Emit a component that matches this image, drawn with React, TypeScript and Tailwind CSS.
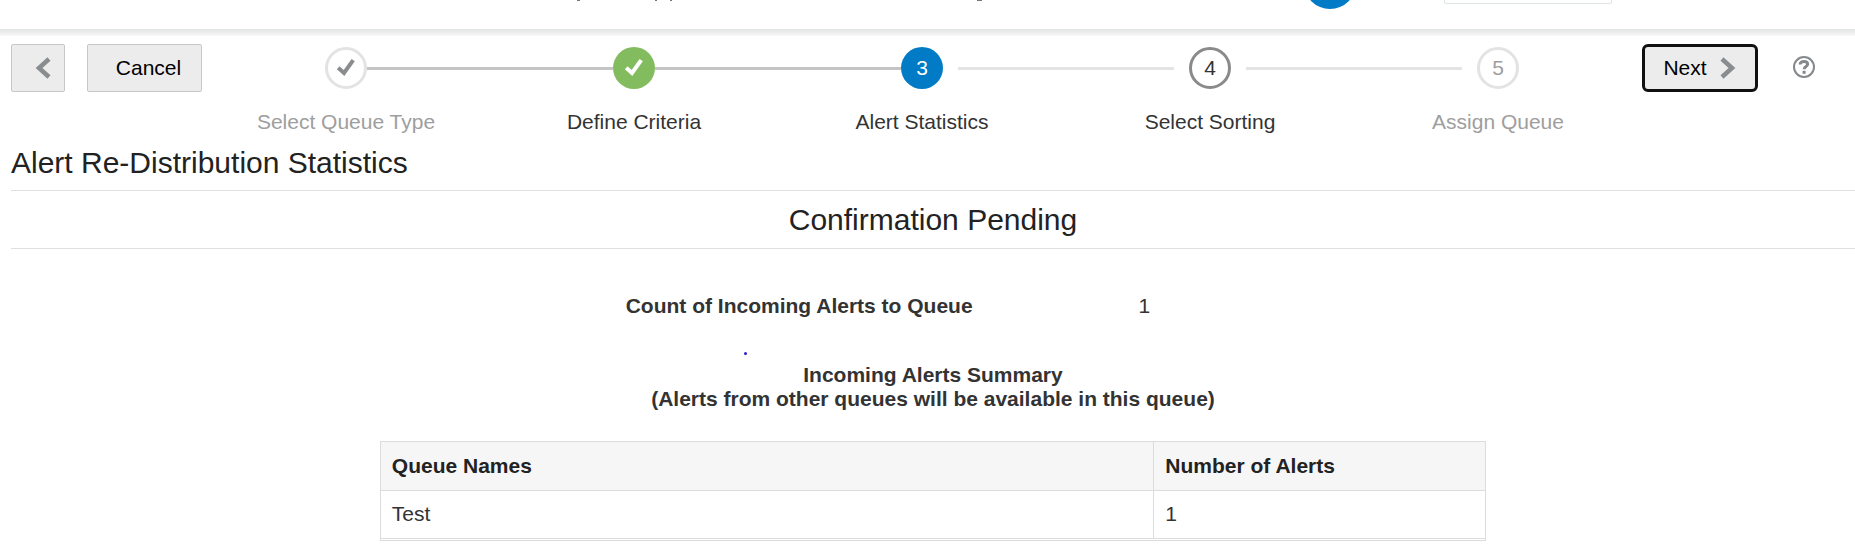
import React from 'react';

type StepState = 'visited' | 'done' | 'current' | 'next' | 'disabled';

interface Step {
  id: number;
  label: string;
  state: StepState;
}

interface QueueRow {
  name: string;
  alerts: number;
}

const steps: Step[] = [
  { id: 1, label: 'Select Queue Type', state: 'visited' },
  { id: 2, label: 'Define Criteria', state: 'done' },
  { id: 3, label: 'Alert Statistics', state: 'current' },
  { id: 4, label: 'Select Sorting', state: 'next' },
  { id: 5, label: 'Assign Queue', state: 'disabled' },
];

const queues: QueueRow[] = [{ name: 'Test', alerts: 1 }];

const circleStyles: Record<StepState, string> = {
  visited: 'border-[3px] border-[#e3e3e3] bg-white text-[#8a8d8f]',
  done: 'bg-[#82bc5e] text-white',
  current: 'bg-[#027bc7] text-white',
  next: 'border-[3px] border-[#8a8a8a] bg-white text-[#333333]',
  disabled: 'border-[3px] border-[#e3e3e3] bg-white text-[#9e9e9e]',
};

const CheckIcon = () => (
  <svg width="20" height="20" viewBox="0 0 20 20" fill="none" aria-hidden="true">
    <path d="M2.2 9.8L8 15L17.2 2.2" stroke="currentColor" strokeWidth="4" />
  </svg>
);

const Connector: React.FC<{ from: StepState }> = ({ from }) => {
  const passed = from === 'visited' || from === 'done';
  return (
    <span
      className={`absolute top-5 h-[3px] ${
        passed
          ? 'left-[calc(50%+21px)] right-[calc(-50%+21px)] bg-[#c4c4c4]'
          : 'left-[calc(50%+36px)] right-[calc(-50%+36px)] bg-[#e4e4e4]'
      }`}
    />
  );
};

const Train = () => (
  <ol className="flex-1 flex">
    {steps.map((step, i) => {
      const muted = step.state === 'visited' || step.state === 'disabled';
      return (
        <li key={step.id} className="relative flex-1 flex flex-col items-center">
          {i < steps.length - 1 && <Connector from={step.state} />}
          <button
            type="button"
            aria-label={step.label}
            disabled={step.state === 'disabled'}
            className={`w-[42px] h-[42px] rounded-full flex items-center justify-center ${circleStyles[step.state]}`}
          >
            {step.state === 'visited' || step.state === 'done' ? <CheckIcon /> : step.id}
          </button>
          <span className={`mt-[21px] whitespace-nowrap ${muted ? 'text-[#9e9e9e]' : 'text-[#333333]'}`}>
            {step.label}
          </span>
        </li>
      );
    })}
  </ol>
);

const AppHeader = () => (
  <header className="relative h-[29px] overflow-hidden">
    {/* lower edge of the scrolled branding bar */}
    <svg className="absolute left-[576px] top-0" width="410" height="2" viewBox="0 0 410 2" aria-hidden="true">
      <path d="M1 0.5H4M79 0.5H81M94 0.5H96M401 0.5H406" stroke="#777777" />
    </svg>
    <div className="absolute left-[1304px] -top-[43px] w-[52px] h-[52px] rounded-full bg-[#027bc7]" />
    <div className="absolute left-[1444px] -top-9 w-[168px] h-10 rounded-xs border border-[#dfe4e7]" />
  </header>
);

export default function App() {
  return (
    <div className="overflow-x-hidden bg-white font-['Liberation_Sans',Arial,sans-serif] text-[21px] leading-6 text-[#333333]">
      <AppHeader />
      <div className="h-[7px] bg-linear-to-b from-[#e2e3e3] to-[#f8f8f8]" />

      <div className="flex items-start pl-[11px] pr-[39px] pt-2">
        <button
          type="button"
          aria-label="Back"
          className="w-[54px] h-12 rounded-xs border border-[#c4c8cb] bg-[#ececec] flex items-center justify-end pr-3"
        >
          <svg width="18" height="24" viewBox="0 0 18 24" fill="none" aria-hidden="true">
            <path d="M15 3L5 12L15 21" stroke="#8a8d8f" strokeWidth="4.5" />
          </svg>
        </button>
        <button
          type="button"
          className="ml-[22px] h-12 w-[115px] pl-2 rounded-xs border border-[#c4c8cb] bg-[#ececec] text-black"
        >
          Cancel
        </button>
        <div className="flex-1 flex pt-[3px]">
          <Train />
        </div>
        <button
          type="button"
          className="h-12 w-[116px] rounded-md border-[3px] border-[#101010] bg-[#ececec] text-black flex items-center justify-center gap-3"
        >
          Next
          <svg width="18" height="24" viewBox="0 0 18 24" fill="none" aria-hidden="true">
            <path d="M3 3L13 12L3 21" stroke="#8a8d8f" strokeWidth="4.5" />
          </svg>
        </button>
        <button type="button" aria-label="Help" className="ml-[34px] mt-[11px]">
          <svg width="24" height="24" viewBox="0 0 24 24" fill="none" aria-hidden="true">
            <circle cx="12" cy="12" r="10" stroke="#85898c" strokeWidth="2" />
            <path
              d="M8.1 9.6C8.1 7.3 9.8 6.6 12 6.6C14.4 6.6 15.6 7.6 15.6 9.2C15.6 11.6 12.2 11.4 12.2 14.2"
              stroke="#85898c"
              strokeWidth="3"
            />
            <rect x="10.6" y="15.8" width="3" height="3" fill="#85898c" />
          </svg>
        </button>
      </div>

      <main className="pl-[11px]">
        <h1 className="h-[57px] pt-[9px] text-[30px] leading-10 text-[#222222] border-b border-[#dfdfdf]">
          Alert Re-Distribution Statistics
        </h1>
        <h2 className="h-[58px] pt-[9px] text-[30px] leading-10 text-center text-[#222222] border-b border-[#dfdfdf]">
          Confirmation Pending
        </h2>

        <dl className="mt-[45px] flex justify-center gap-[166px] pr-[90px]">
          <dt className="font-bold">Count of Incoming Alerts to Queue</dt>
          <dd>1</dd>
        </dl>

        <div className="relative mt-[45px]">
          <span className="absolute left-[733px] -top-[11px] w-[3px] h-[3px] rounded-full bg-[#2a1fd0]" />
          <p className="text-center font-bold">
            Incoming Alerts Summary
            <br />
            (Alerts from other queues will be available in this queue)
          </p>
        </div>

        <div className="mt-[30px] mx-auto w-3/5 border border-[#dcdcdc] pb-px">
          <table className="w-full text-left">
            <thead className="bg-[#f6f6f6] text-[#222222]">
              <tr className="h-12 border-b border-[#dcdcdc]">
                <th className="w-[70%] px-[11px] border-r border-[#dcdcdc]">Queue Names</th>
                <th className="px-[11px]">Number of Alerts</th>
              </tr>
            </thead>
            <tbody>
              {queues.map((queue) => (
                <tr key={queue.name} className="h-12 border-b border-[#dcdcdc]">
                  <td className="px-[11px] border-r border-[#dcdcdc]">{queue.name}</td>
                  <td className="px-[11px]">{queue.alerts}</td>
                </tr>
              ))}
            </tbody>
          </table>
        </div>
      </main>
    </div>
  );
}
